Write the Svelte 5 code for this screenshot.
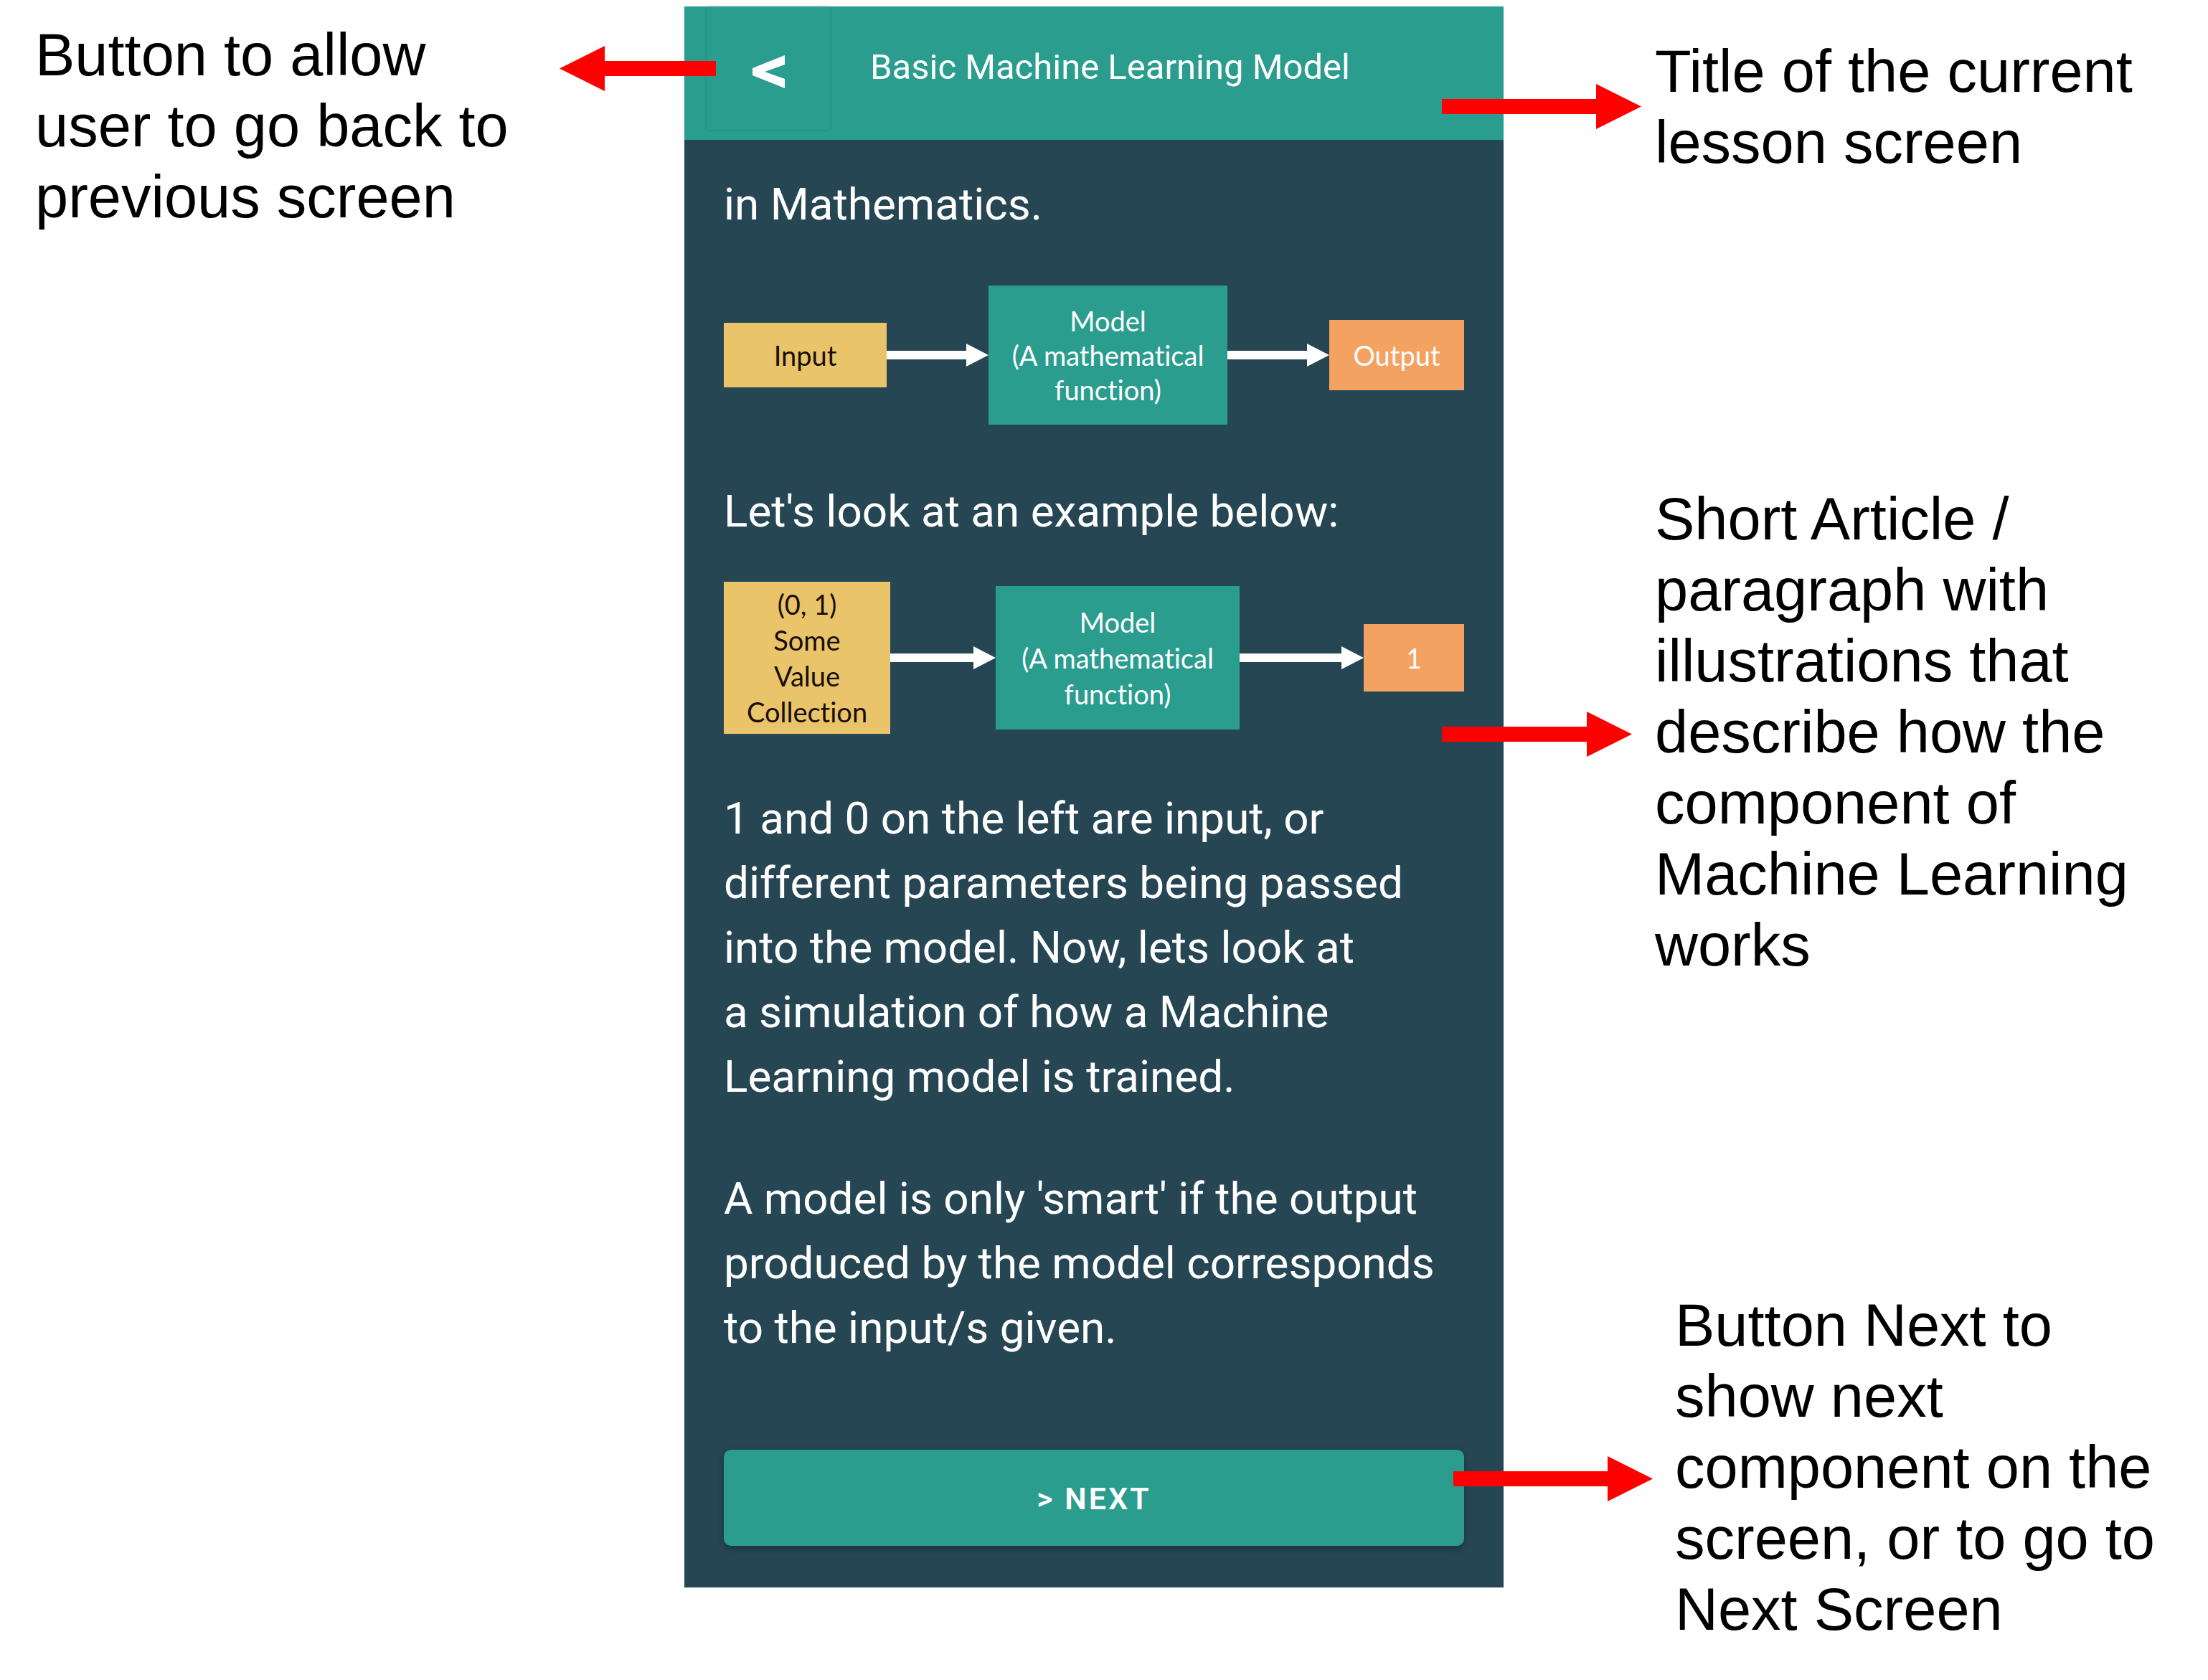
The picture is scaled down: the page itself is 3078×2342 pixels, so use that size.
<script>
  const notes = [
    { id: 'title', text: 'Title of the current\nlesson screen' },
    {
      id: 'article',
      text: 'Short Article /\nparagraph with\nillustrations that\ndescribe how the\ncomponent of\nMachine Learning\nworks'
    },
    {
      id: 'next',
      text: 'Button Next to\nshow next\ncomponent on the\nscreen, or to go to\nNext Screen'
    }
  ];

  const general = {
    input: 'Input',
    model: 'Model\n(A mathematical\nfunction)',
    output: 'Output'
  };

  const example = {
    input: '(0, 1)\nSome\nValue\nCollection',
    model: 'Model\n(A mathematical\nfunction)',
    output: '1'
  };

  const explanation =
    '1 and 0 on the left are input, or\ndifferent parameters being passed\ninto the model. Now, lets look at\na simulation of how a Machine\nLearning model is trained.';

  const conclusion =
    "A model is only 'smart' if the output\nproduced by the model corresponds\nto the input/s given.";
</script>

{#snippet flow(data, kind)}
  <div class="flow {kind}">
    <div class="box input">{data.input}</div>
    <div class="link"></div>
    <div class="box model">{data.model}</div>
    <div class="link"></div>
    <div class="box output">{data.output}</div>
  </div>
{/snippet}

<div class="board">
  <aside class="notes left">
    <div class="note back-note">
      <p>{'Button to allow\nuser to go back to\nprevious screen'}</p>
      <span class="pointer"></span>
    </div>
  </aside>

  <main class="phone">
    <header>
      <button class="back" type="button" aria-label="Back">
        <svg viewBox="0 0 45 46" width="45" height="46" aria-hidden="true">
          <path d="M45 0V13L17 23L45 33V46L0 28V18Z" fill="#fff" />
        </svg>
      </button>
      <h1>Basic Machine Learning Model</h1>
    </header>
    <article>
      <p>in Mathematics.</p>
      {@render flow(general, 'general')}
      <p>Let's look at an example below:</p>
      {@render flow(example, 'example')}
      <p>{explanation}</p>
      <p class="conclusion">{conclusion}</p>
      <button class="next" type="button">&gt; NEXT</button>
    </article>
  </main>

  <aside class="notes right">
    {#each notes as note (note.id)}
      <div class="note {note.id}-note">
        <p>{note.text}</p>
        <span class="pointer"></span>
      </div>
    {/each}
  </aside>
</div>

<style>
  :global(body) {
    margin: 0;
    background: #fff;
  }

  p,
  h1 {
    margin: 0;
    font-weight: 400;
    white-space: pre-line;
  }

  .board {
    display: grid;
    grid-template-columns: 954fr 1142fr 982fr;
    align-items: start;
    padding-top: 9px;
  }

  /* Side notes */
  .notes {
    display: flex;
    flex-direction: column;
    position: relative;
    z-index: 1;
    font: 83px/99px 'Liberation Sans', Arial, sans-serif;
    color: #000;
  }

  .left {
    padding: 18px 0 0 49px;
  }

  .right {
    padding: 41px 0 0 211px;
  }

  .note {
    position: relative;
  }

  .article-note {
    margin: 426px 0 431px;
  }

  .next-note {
    padding-left: 28px;
  }

  .pointer {
    position: absolute;
    height: 63px;
    background: #f00;
    clip-path: polygon(0 21px, calc(100% - 63px) 21px, calc(100% - 63px) 0, 100% 50%, calc(100% - 63px) 100%, calc(100% - 63px) 42px, 0 42px);
  }

  .back-note .pointer {
    top: 37px;
    right: -44px;
    width: 218px;
    rotate: 180deg;
  }

  .title-note .pointer {
    top: 67px;
    left: -297px;
    width: 278px;
  }

  .article-note .pointer {
    top: 318px;
    left: -297px;
    width: 265px;
  }

  .next-note .pointer {
    top: 232px;
    left: -281px;
    width: 278px;
  }

  /* Phone screen */
  .phone {
    background: #264653;
    color: #fff;
    font-family: Roboto, sans-serif;
  }

  header {
    display: flex;
    align-items: flex-start;
    gap: 56px;
    padding: 0 31px 14px;
    background: #2a9d8f;
  }

  button {
    border: 0;
    color: #fff;
    font-family: inherit;
    cursor: pointer;
  }

  .back {
    display: flex;
    align-items: center;
    justify-content: center;
    width: 172px;
    height: 172px;
    padding: 10px 0 0;
    background: #2a9d8f;
    box-shadow: 0 0 3px rgba(0, 60, 60, 0.3);
  }

  h1 {
    padding-top: 55px;
    font-size: 49px;
    line-height: 60px;
  }

  article {
    display: flex;
    flex-direction: column;
    padding: 45px 55px 58px;
    font-size: 62px;
    line-height: 90px;
  }

  .flow {
    display: grid;
    align-items: center;
    font-family: Lato, sans-serif;
    font-size: 38px;
    font-variant-ligatures: none;
    text-align: center;
    white-space: pre-line;
  }

  .general {
    grid-template-columns: 227fr 142fr 333fr 142fr 188fr;
    margin: 68px 0 76px;
    line-height: 48px;
  }

  .example {
    grid-template-columns: 232fr 147fr 340fr 173fr 140fr;
    margin: 53px 0 73px;
    line-height: 50px;
  }

  .input {
    padding: 21px 0;
    background: #e9c46a;
    color: #1a0d05;
  }

  .example .input {
    padding: 6px 0;
  }

  .model {
    padding: 25px 0;
    background: #2a9d8f;
  }

  .output {
    padding: 25px 0;
    background: #f4a261;
  }

  .example .output {
    padding: 22px 0;
  }

  .link {
    height: 32px;
    background: #fff;
    clip-path: polygon(0 10px, calc(100% - 31px) 10px, calc(100% - 31px) 0, 100% 50%, calc(100% - 31px) 100%, calc(100% - 31px) 22px, 0 22px);
  }

  .conclusion {
    margin: 80px 0 125px;
  }

  .next {
    padding: 38px 0 36px;
    border-radius: 10px;
    background: #2a9d8f;
    box-shadow: 0 4px 10px rgba(0, 30, 30, 0.4);
    font-size: 43px;
    font-weight: 600;
    line-height: 60px;
    letter-spacing: 3px;
  }
</style>
